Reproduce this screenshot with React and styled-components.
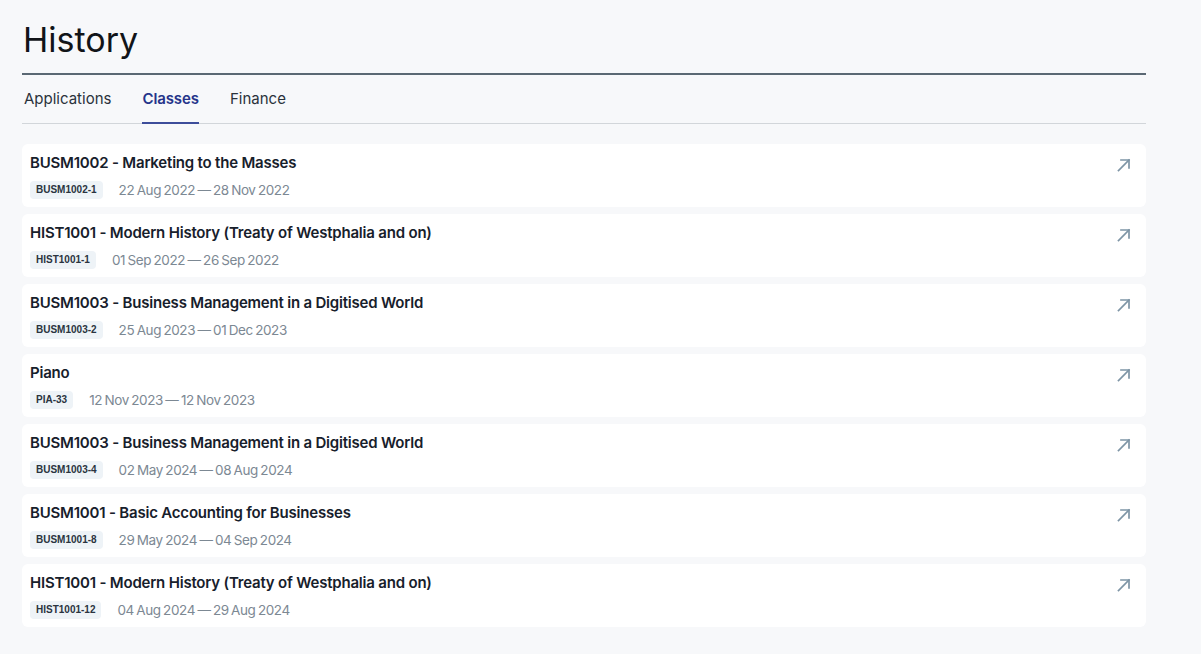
import React from 'react'
import styled, { createGlobalStyle } from 'styled-components'

const GlobalStyle = createGlobalStyle`
  html, body {
    margin: 0;
    padding: 0;
    background: #f7f8fa;
  }
  body {
    font-family: Inter, "Noto Sans", sans-serif;
    color: #1b2430;
  }
`

const Page = styled.div`
  width: 1124px;
  padding: 18px 0 26px 22px;
`

const Title = styled.h1`
  margin: 0;
  padding-left: 1px;
  font-size: 34px;
  font-weight: 400;
  line-height: 44px;
  color: #111418;
  border-bottom: 2px solid #5a6873;
  padding-bottom: 11px;
`

const Tabs = styled.nav`
  display: flex;
  gap: 31px;
  padding-left: 2px;
  border-bottom: 1px solid #d2d6da;
`

const Tab = styled.div`
  padding: 14px 0 15px;
  font-size: 15px;
  line-height: 20px;
  font-weight: ${p => (p.active ? 600 : 400)};
  color: ${p => (p.active ? '#25348a' : '#2a323b')};
  letter-spacing: ${p => (p.active ? '-0.1px' : '0')};
  box-shadow: ${p => (p.active ? 'inset 0 -2px 0 #3d4d9a' : 'none')};
  margin-bottom: -1px;
`

const List = styled.div`
  display: flex;
  flex-direction: column;
  gap: 7px;
  margin-top: 20px;
`

const Card = styled.div`
  display: flex;
  justify-content: space-between;
  background: #ffffff;
  border-radius: 6px;
  padding: 10px 13px 8px 8px;
  height: 45px;
`

const Info = styled.div`
  display: flex;
  flex-direction: column;
  gap: 9px;
`

const ClassName = styled.div`
  font-size: 15px;
  font-weight: 600;
  line-height: 18px;
  color: #17202b;
  letter-spacing: -0.2px;
`

const Meta = styled.div`
  display: flex;
  align-items: center;
  gap: 16px;
`

const Badge = styled.span`
  background: #eef3f7;
  border-radius: 4px;
  padding: 0 6px;
  height: 18px;
  line-height: 18px;
  font-family: "Liberation Sans", Arial, sans-serif;
  font-size: 10px;
  font-weight: 700;
  color: #2a3440;
`

const Dates = styled.span`
  font-size: 13.5px;
  letter-spacing: -0.4px;
  word-spacing: -1px;
  color: #7c8893;
`

const Arrow = styled.svg`
  width: 16px;
  height: 16px;
  margin-top: 3px;
  margin-right: 1px;
  color: #7e95a6;
`

const classes = [
  { name: 'BUSM1002 - Marketing to the Masses', code: 'BUSM1002-1', from: '22 Aug 2022', to: '28 Nov 2022' },
  { name: 'HIST1001 - Modern History (Treaty of Westphalia and on)', code: 'HIST1001-1', from: '01 Sep 2022', to: '26 Sep 2022' },
  { name: 'BUSM1003 - Business Management in a Digitised World', code: 'BUSM1003-2', from: '25 Aug 2023', to: '01 Dec 2023' },
  { name: 'Piano', code: 'PIA-33', from: '12 Nov 2023', to: '12 Nov 2023' },
  { name: 'BUSM1003 - Business Management in a Digitised World', code: 'BUSM1003-4', from: '02 May 2024', to: '08 Aug 2024' },
  { name: 'BUSM1001 - Basic Accounting for Businesses', code: 'BUSM1001-8', from: '29 May 2024', to: '04 Sep 2024' },
  { name: 'HIST1001 - Modern History (Treaty of Westphalia and on)', code: 'HIST1001-12', from: '04 Aug 2024', to: '29 Aug 2024' },
]

const ArrowIcon = () => (
  <Arrow viewBox="0 0 16 16" fill="none" stroke="currentColor" strokeWidth="1.7" strokeLinecap="square">
    <path d="M2.5 13.5L13 3" />
    <path d="M5 3H13V11" />
  </Arrow>
)

const App = () => (
  <Page>
    <GlobalStyle />
    <Title>History</Title>
    <Tabs>
      <Tab>Applications</Tab>
      <Tab active>Classes</Tab>
      <Tab>Finance</Tab>
    </Tabs>
    <List>
      {classes.map((c, i) => (
        <Card key={i}>
          <Info>
            <ClassName>{c.name}</ClassName>
            <Meta>
              <Badge>{c.code}</Badge>
              <Dates>{c.from} — {c.to}</Dates>
            </Meta>
          </Info>
          <ArrowIcon />
        </Card>
      ))}
    </List>
  </Page>
)

export default App
